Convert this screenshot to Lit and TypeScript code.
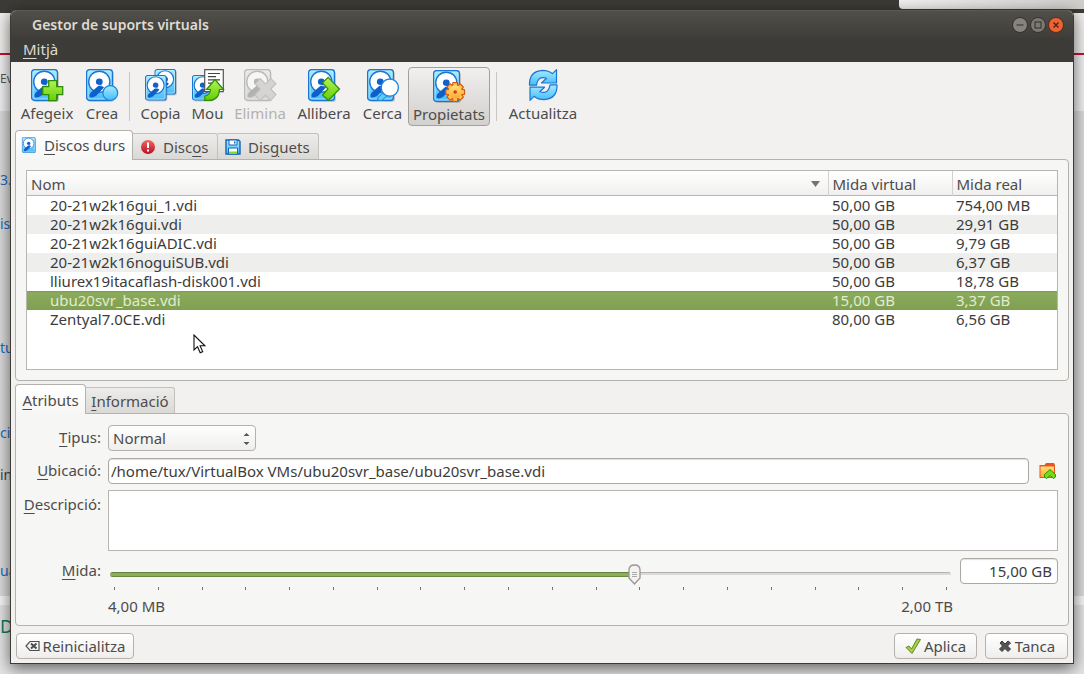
import { LitElement, html, svg, css } from "lit";
import { customElement, property, state } from "lit/decorators.js";
import { classMap } from "lit/directives/class-map.js";

interface Medium {
  name: string;
  virtual: string;
  actual: string;
}

const MEDIA: Medium[] = [
  { name: "20-21w2k16gui_1.vdi", virtual: "50,00 GB", actual: "754,00 MB" },
  { name: "20-21w2k16gui.vdi", virtual: "50,00 GB", actual: "29,91 GB" },
  { name: "20-21w2k16guiADIC.vdi", virtual: "50,00 GB", actual: "9,79 GB" },
  { name: "20-21w2k16noguiSUB.vdi", virtual: "50,00 GB", actual: "6,37 GB" },
  { name: "lliurex19itacaflash-disk001.vdi", virtual: "50,00 GB", actual: "18,78 GB" },
  { name: "ubu20svr_base.vdi", virtual: "15,00 GB", actual: "3,37 GB" },
  { name: "Zentyal7.0CE.vdi", virtual: "80,00 GB", actual: "6,56 GB" },
];

const defs = svg`
  <defs>
    <linearGradient id="sky" x1="0" y1="0" x2="0" y2="1">
      <stop offset="0" stop-color="#a6ebff" /><stop offset="1" stop-color="#46bcfa" />
    </linearGradient>
    <linearGradient id="leaf" x1="0" y1="0" x2="0" y2="1">
      <stop offset="0" stop-color="#b4f25a" /><stop offset="1" stop-color="#62cf00" />
    </linearGradient>
    <linearGradient id="sun" x1="0" y1="0" x2="0" y2="1">
      <stop offset="0" stop-color="#ffe27a" /><stop offset="1" stop-color="#ffa733" />
    </linearGradient>
    <linearGradient id="ruby" x1="0" y1="0" x2="0" y2="1">
      <stop offset="0" stop-color="#ee6a5c" /><stop offset="1" stop-color="#b80f2a" />
    </linearGradient>
  </defs>`;

const disk = svg`
  <rect x="2" y="2" width="26" height="31" rx="3" fill="#000" opacity=".18" />
  <rect x=".7" y=".7" width="25.6" height="30.6" rx="2.6" fill="url(#sky)" stroke="#1a76d2" stroke-width="1.4" />
  <rect x="2" y="2" width="23" height="28" rx="1.5" fill="none" stroke="#c4f3ff" stroke-width=".8" />
  <circle cx="13.3" cy="12.8" r="10.6" fill="#fff" stroke="#1a76d2" stroke-width="1.4" />
  <path d="M14.5 15 L18 18.5 L10 27 Q5.500 29.5 3.500 27.5 Q3 24.5 6.500 22 Z" fill="#0f5fca" />
  <circle cx="13.3" cy="12.8" r="3.4" fill="#0f62cc" />
  <path d="M9.700 15.8 L17 17" stroke="#fff" stroke-width=".8" />`;

const glyphs: Record<string, unknown> = {
  add: svg`${disk}
    <path d="M17.7 11.7 h8 v6 h6 v8 h-6 v6 h-8 v-6 h-6 v-8 h6 Z" fill="url(#leaf)" stroke="#2f8c0a" stroke-width="1.3" />`,
  create: svg`${disk}
    <circle cx="24.3" cy="24" r="7.4" fill="url(#sky)" stroke="#1a86dc" stroke-width="1.2" />`,
  copy: svg`
    <g transform="translate(9.5 0) scale(.8)">${disk}</g>
    <g transform="translate(0 6) scale(.8)">${disk}</g>`,
  move: svg`
    <g transform="translate(0 6) scale(.8)">${disk}</g>
    <path d="M12.7 .7 h18.6 v22 h-18.6 Z" fill="#fff" stroke="#555" stroke-width="1.2" />
    <path d="M16 4.5 h12 M16 7.7 h8 M16 10.9 h12 M16 14.1 h4" stroke="#444" stroke-width="1.2" />
    <path d="M23 10.5 L31.5 20.5 H27.5 Q27 31.3 17 31.3 H12.7 L13 27 Q18 26 18.5 20.5 H14.5 Z" fill="url(#leaf)" stroke="#2f8c0a" stroke-width="1.2" />`,
  remove: svg`${disk}
    <path d="M16.2 9.5 L21.5 14.8 L26.8 9.5 L32 14.7 L26.7 20 L32 25.5 L26.8 31.5 L21.5 26 L16.2 31.5 L11 25.8 L16.3 20 L11 14.7 Z" fill="#aaa" stroke="#777" stroke-width="1.1" />`,
  release: svg`${disk}
    <path d="M20.2 8.3 L31.5 20 L20.2 31.4 L14.5 26 L20 20 L14.5 13.8 Z" fill="url(#leaf)" stroke="#2f8c0a" stroke-width="1.2" />`,
  search: svg`${disk}
    <path d="M16.5 23.5 L20 27 L14.5 31.5 L10.5 31 L11 28.5 Z" fill="#5fcbfa" stroke="#2384da" stroke-width="1" />
    <circle cx="22.8" cy="18.6" r="8.6" fill="#fff" stroke="#2384da" stroke-width="1.4" />`,
  properties: svg`${disk}
    <g transform="translate(22.2 22)">
      ${[0, 45, 90, 135].map(
        (a) => svg`<rect x="-2.4" y="-9.3" width="4.8" height="18.6" rx=".6" transform="rotate(${a})" fill="#ffb53e" stroke="#d8560c" stroke-width="1.3" />`,
      )}
      <circle r="7.2" fill="#ffc250" stroke="#d8560c" stroke-width=".9" />
      ${[0, 45, 90, 135].map(
        (a) => svg`<rect x="-1.8" y="-8.6" width="3.6" height="17.2" transform="rotate(${a})" fill="#ffc250" />`,
      )}
      <circle r="6.4" fill="url(#sun)" />
      <circle r="1.8" fill="#d03f0a" />
    </g>`,
  refresh: svg`
    <path d="M2.5 16.2 Q2 2.200 15.5 1.300 Q21.5 1.300 25.5 4.700 L29.5 .7 V14 H14.5 L19.5 9.200 Q11 6.500 9.500 16.2 Z" fill="url(#sky)" stroke="#1a76d2" stroke-width="1.2" stroke-linejoin="round" />
    <path d="M30 15.8 Q30.5 29.8 17 30.7 Q11 30.7 7 27.3 L3 31.3 V18.2 H17.5 L12.8 22.8 Q21.5 25.5 23 15.8 Z" fill="url(#sky)" stroke="#1a76d2" stroke-width="1.2" stroke-linejoin="round" />`,
};

@customElement("tool-button")
export class ToolButton extends LitElement {
  @property() icon = "";
  @property() label = "";
  @property({ type: Boolean }) disabled = false;
  @property({ type: Boolean }) pressed = false;

  static styles = css`
    :host { display: block; }
    .tool {
      display: flex;
      flex-direction: column;
      align-items: center;
      gap: 2px;
      width: 100%;
      margin: 0;
      padding: 2px 0;
      border: 1px solid transparent;
      border-radius: 4px;
      background: none;
      color: #4c4c4c;
      font: 15px/20px "Noto Sans", sans-serif;
      white-space: nowrap;
    }
    .pressed {
      margin-top: 1px;
      padding-bottom: 1px;
      border-color: #a3a09c;
      background: linear-gradient(#f1f0ef, #dedcda 60%, #d3d1ce);
    }
    .tool:disabled { color: #b4b1ae; }
    .tool:disabled .glyph { filter: grayscale(1); opacity: 0.4; }
    .glyph { width: 32px; height: 32px; overflow: visible; }
    .label { display: block; }
  `;

  render() {
    return html`
      <button
        class=${classMap({ tool: true, pressed: this.pressed })}
        ?disabled=${this.disabled}
        aria-pressed=${this.pressed ? "true" : "false"}
      >
        <svg class="glyph" viewBox="0 0 32 32" aria-hidden="true">${defs}${glyphs[this.icon]}</svg>
        <span class="label">${this.label}</span>
      </button>
    `;
  }
}

@customElement("app-root")
export class AppRoot extends LitElement {
  @state() private selected = 5;
  @state() private size = 625;

  static styles = css`
    :host {
      display: grid;
      position: relative;
      box-sizing: border-box;
      min-height: 100vh;
      padding: 10px;
      overflow: hidden;
      font: 15px/20px "Noto Sans", sans-serif;
      color: #4c4c4c;
    }
    *, *::before { box-sizing: border-box; }
    u { text-decoration-thickness: 1px; text-underline-offset: 3px; }
    button, input, select, textarea { font: inherit; color: inherit; margin: 0; }

    .backdrop {
      position: absolute;
      inset: 0;
      overflow: hidden;
      background: linear-gradient(#3c3b37 0 13px, #f0efee 13px 53px, #c41230 53px 55px, #f1f1f3 55px 111px, #dcdcdc 111px 596px, #f7f7f7 596px 605px, #e4e4e4 605px);
    }
    .behind {
      display: grid;
      grid-template-rows: 69px 20px 81px 20px 24px 20px 104px 20px 65px 20px 22px 20px 76px 20px 35px 20px;
      width: 40px;
      font-size: 14px;
      color: #1a6dc4;
    }
    .behind :nth-child(1) { grid-row: 2; font-size: 12px; color: #555; }
    .behind :nth-child(2) { grid-row: 4; }
    .behind :nth-child(3) { grid-row: 6; }
    .behind :nth-child(4) { grid-row: 8; }
    .behind :nth-child(5) { grid-row: 10; }
    .behind :nth-child(6) { grid-row: 12; color: #444; }
    .behind :nth-child(7) { grid-row: 14; }
    .behind :nth-child(8) { grid-row: 16; font-size: 18px; color: #0a7a5a; }
    .panel-light {
      position: absolute;
      top: 0;
      right: 0;
      width: 185px;
      height: 9px;
      border-radius: 0 0 0 4px;
      background: linear-gradient(90deg, #f2f1f0, #cfcecb);
    }

    .window {
      position: relative;
      display: flex;
      flex-direction: column;
      min-width: 0;
      border: 1px solid #3c3b37;
      border-top-color: #5b5a54;
      border-radius: 6px 6px 0 0;
      background: #f2f1f0;
      box-shadow: 0 4px 16px rgba(0, 0, 0, 0.6);
    }
    .titlebar {
      display: flex;
      align-items: center;
      justify-content: space-between;
      height: 27px;
      padding: 0 9px 0 21px;
      border-radius: 5px 5px 0 0;
      background: linear-gradient(#504f4a, #3e3d39);
    }
    .title { margin: 0; font-size: 14px; font-weight: 600; color: #dfdbd2; }
    .controls { display: flex; gap: 2px; }
    .control { width: 16px; height: 16px; padding: 0; border: 0; background: none; }
    .control svg { display: block; }
    .menubar { height: 24px; padding: 1px 12px; background: #3c3b37; color: #dfdbd2; }
    .menubar button { padding: 0; border: 0; background: none; }

    .toolbar {
      display: grid;
      grid-template-columns: 66px 44px 11px 51px 43px 62px 66px 51px 82px 13px 80px;
      padding: 4px 3px;
    }
    .divider { justify-self: center; width: 1px; height: 49px; margin-top: 6px; background: #c9c6c3; }

    .tabs { display: flex; align-items: flex-end; margin: 0 4px -1px; position: relative; z-index: 1; }
    .tab {
      display: flex;
      align-items: center;
      gap: 7px;
      height: 26px;
      padding: 0 0 0 7px;
      margin-bottom: 1px;
      border: 1px solid #c4c0bc;
      border-left-width: 0;
      border-bottom: 0;
      border-radius: 0 3px 0 0;
      background: linear-gradient(#ececea, #dbd9d6);
      white-space: nowrap;
    }
    .tab.active {
      height: 30px;
      margin-bottom: 0;
      padding-left: 5px;
      border: 1px solid #b5b1ad;
      border-bottom: 0;
      border-radius: 4px 4px 0 0;
      background: linear-gradient(#fff, #f6f6f5);
    }
    .media-tabs .tab { width: 101px; }
    .media-tabs .tab.active { width: 118px; padding-bottom: 1px; }
    .media-tabs .tab.discs { width: 85px; }
    .detail-tabs .tab { width: 89px; justify-content: center; padding: 0; }
    .detail-tabs .tab.active { width: 71px; }
    .tab svg { flex: none; width: 16px; height: 16px; }
    .pane { margin: 0 4px; border: 1px solid #b5b1ad; border-radius: 0 4px 4px 4px; background: #f6f6f5; }

    .media { display: flex; flex: 1; min-height: 222px; padding: 10px; }
    .tree { position: relative; flex: 1; border: 1px solid #b9b5b2; background: #fff; }
    .list { width: 100%; border-collapse: collapse; table-layout: fixed; color: #3c3c3c; }
    .list .virtual { width: 124px; }
    .list .actual { width: 105px; }
    .list th {
      height: 25px;
      padding: 0 4px;
      border-left: 1px solid #d5d1cd;
      background: linear-gradient(#fff, #f0efee);
      box-shadow: inset 0 -1px 0 #b9b5b2;
      color: #4c4c4c;
      font-weight: 400;
      text-align: left;
    }
    .list th:first-child { border-left: 0; }
    .sort { display: flex; align-items: center; justify-content: space-between; padding-right: 4px; }
    .list td { height: 19px; padding: 0 4px; line-height: 19px; white-space: nowrap; }
    .list td:first-child { padding-left: 23px; }
    .list tr.alt { background: #eeeeed; }
    .list tr.selected { background: linear-gradient(#7c9c4e, #8aaa5c 2px, #809f51); color: #e2eccf; }
    .pointer { position: absolute; left: 166px; top: 163px; width: 13px; height: 21px; }

    .detail-tabs { margin-top: 3px; }
    .details {
      display: grid;
      grid-template-columns: 85px minmax(0, 1fr) 98px;
      column-gap: 7px;
      padding: 11px 10px 8px 0;
    }
    .details label { text-align: right; line-height: 25px; }
    .wide { grid-column: 2 / 4; }
    .field {
      height: 26px;
      border: 1px solid #aca8a4;
      border-radius: 4px;
      background: #fff;
      box-shadow: inset 0 1px 1px #e4e2e0;
      color: #3c3c3c;
    }
    .kind {
      appearance: none;
      display: block;
      width: 148px;
      height: 26px;
      padding: 0 4px;
      border: 1px solid #b5b1ad;
      border-radius: 4px;
      background: url('data:image/svg+xml,<svg xmlns="http://www.w3.org/2000/svg" width="7" height="13"><path d="M3.500 1l3 3h-6zM3.500 13l3-3h-6z" fill="%23555"/></svg>') no-repeat right 5px center, linear-gradient(#fff, #efeeed);
    }
    .kind, .kind-label { margin-bottom: 7px; }
    .location { display: flex; align-items: center; gap: 10px; margin-bottom: 6px; }
    .location .field { flex: 1; min-width: 0; padding: 0 2px; }
    .browse { width: 19px; height: 18px; padding: 0; border: 0; background: none; }
    .browse svg { display: block; }
    .description {
      display: block;
      width: 100%;
      height: 61px;
      margin-bottom: 7px;
      padding: 2px;
      border: 1px solid #b9b5b2;
      background: #fff;
      resize: none;
    }
    .description-label { padding-top: 2px; }
    .amount { width: 100%; padding: 0 5px; text-align: right; }
    .range { padding-top: 5px; }
    .slider {
      appearance: none;
      display: block;
      width: 100%;
      height: 22px;
      padding: 0 2px;
      background: none;
    }
    .slider::-webkit-slider-runnable-track {
      height: 5px;
      border-radius: 3px;
      background:
        linear-gradient(#66823d 1px, #8cae5c 1px 4px, #6c8a43 4px) 0 0 / var(--fill) 100% no-repeat,
        linear-gradient(#b5b1ad 1px, #dcdad8 1px 3px, #f6f6f5 3px);
    }
    .slider::-webkit-slider-thumb {
      appearance: none;
      width: 13px;
      height: 21px;
      margin-top: -8px;
      border: 0;
      background: url('data:image/svg+xml,<svg xmlns="http://www.w3.org/2000/svg" width="13" height="21"><path d="M1 6Q1 1 6.500 1T12 6V14L6.500 20L1 14Z" fill="%23f4f3f2" stroke="%23999591" stroke-width="1.300"/><path d="M4 8.500h5M4 10.500h5M4 12.500h5" stroke="%23aaa"/></svg>') no-repeat;
    }
    .ticks { display: flex; justify-content: space-between; height: 3px; margin: 2px 6px 0; }
    .ticks i { width: 1px; background: #77736f; }
    .ends { display: flex; justify-content: space-between; margin-top: 5px; line-height: 22px; }

    .footer { display: flex; gap: 8px; padding: 7px 5px 4px; }
    .push {
      display: flex;
      align-items: center;
      justify-content: center;
      gap: 3px;
      min-width: 83px;
      height: 26px;
      padding: 0 5px;
      border: 1px solid #b5b1ad;
      border-radius: 4px;
      background: linear-gradient(#fff, #efeeed);
      white-space: nowrap;
    }
    .push:first-child { min-width: 118px; margin-right: auto; }
    .push svg { flex: none; }
  `;

  private tool(icon: string, label: string, disabled = false, pressed = false) {
    return html`<tool-button icon=${icon} label=${label} ?disabled=${disabled} ?pressed=${pressed}></tool-button>`;
  }

  render() {
    return html`
      <div class="backdrop" aria-hidden="true">
        <div class="behind">
          <span>Ev</span><span>3.0</span><span>is</span><span>tu</span><span>ci</span><span>in</span><span>ua</span><span>DX</span>
        </div>
        <div class="panel-light"></div>
      </div>
      <main class="window">
        <header class="titlebar">
          <h1 class="title">Gestor de suports virtuals</h1>
          <div class="controls">
            <button class="control" aria-label="Minimitza">
              <svg width="16" height="16"><circle cx="8" cy="8" r="7.5" fill="#85837c" stroke="#32312d" /><path d="M4.500 8h7" stroke="#3a3935" stroke-width="1.200" /></svg>
            </button>
            <button class="control" aria-label="Maximitza">
              <svg width="16" height="16"><circle cx="8" cy="8" r="7.5" fill="#7b7972" stroke="#32312d" /><rect x="5" y="5" width="6" height="6" fill="none" stroke="#3a3935" stroke-width="1.200" /></svg>
            </button>
            <button class="control" aria-label="Tanca la finestra">
              <svg width="16" height="16"><circle cx="8" cy="8" r="7.5" fill="#ee6336" stroke="#5c2b18" /><path d="M5.500 5.500l5 5m0-5l-5 5" stroke="#4a2415" stroke-width="1.400" /></svg>
            </button>
          </div>
        </header>
        <nav class="menubar"><button><u>M</u>itjà</button></nav>

        <div class="toolbar" role="toolbar">
          ${this.tool("add", "Afegeix")} ${this.tool("create", "Crea")}
          <span class="divider"></span>
          ${this.tool("copy", "Copia")} ${this.tool("move", "Mou")}
          ${this.tool("remove", "Elimina", true)} ${this.tool("release", "Allibera")}
          ${this.tool("search", "Cerca")} ${this.tool("properties", "Propietats", false, true)}
          <span class="divider"></span>
          ${this.tool("refresh", "Actualitza")}
        </div>

        <div class="tabs media-tabs" role="tablist">
          <button class="tab active" role="tab" aria-selected="true">
            <svg viewBox="0 0 32 32">${defs}<g transform="translate(2 0)">${disk}</g></svg>
            <span><u>D</u>iscos durs</span>
          </button>
          <button class="tab discs" role="tab">
            <svg viewBox="0 0 16 16">${defs}<circle cx="8" cy="8" r="7" fill="url(#ruby)" /><path d="M8 3.500v5.500M8 10.500v2" stroke="#fff" stroke-width="2" /></svg>
            <span>Disc<u>o</u>s</span>
          </button>
          <button class="tab" role="tab">
            <svg viewBox="0 0 16 16">${defs}<path d="M1 1h12.500l1.500 1.500V15H1z" fill="url(#sky)" stroke="#1263b8" stroke-width="1.400" /><path d="M4 1h8v5H4z" fill="#fff" stroke="#1263b8" /><path d="M9 2.500h1.500v2H9z" fill="#1263b8" /><path d="M3.500 9h9v6h-9z" fill="#fff" stroke="#1263b8" /><path d="M4 12.500h8V15H4z" fill="#7fdc2c" /></svg>
            <span>Dis<u>g</u>uets</span>
          </button>
        </div>
        <section class="pane media">
          <div class="tree">
            <table class="list">
              <thead>
                <tr>
                  <th><span class="sort">Nom <svg width="9" height="6"><path d="M0 0h9L4.500 6z" fill="#777370" /></svg></span></th>
                  <th class="virtual">Mida virtual</th>
                  <th class="actual">Mida real</th>
                </tr>
              </thead>
              <tbody>
                ${MEDIA.map(
                  (m, i) => html`
                    <tr
                      class=${classMap({ alt: i % 2 === 1, selected: i === this.selected })}
                      @click=${() => (this.selected = i)}
                    >
                      <td>${m.name}</td>
                      <td>${m.virtual}</td>
                      <td>${m.actual}</td>
                    </tr>
                  `,
                )}
              </tbody>
            </table>
            <svg class="pointer" viewBox="0 0 13 21" aria-hidden="true">
              <path d="M1 1v15l3.500-3.300 2.700 6 2.500-1.100-2.600-5.800h4.800z" fill="#fff" stroke="#111" stroke-width="1.100" />
            </svg>
          </div>
        </section>

        <div class="tabs detail-tabs" role="tablist">
          <button class="tab active" role="tab" aria-selected="true"><span><u>A</u>tributs</span></button>
          <button class="tab" role="tab"><span><u>I</u>nformació</span></button>
        </div>
        <section class="pane details">
          <label class="kind-label" for="kind"><u>T</u>ipus:</label>
          <div class="wide"><select class="kind" id="kind"><option>Normal</option></select></div>

          <label for="location"><u>U</u>bicació:</label>
          <div class="wide location">
            <input class="field" id="location" type="text" .value=${"/home/tux/VirtualBox VMs/ubu20svr_base/ubu20svr_base.vdi"} />
            <button class="browse" aria-label="Navega">
              <svg width="18" height="18" viewBox="0 0 18 18">${defs}
                <path d="M.5 3h5L7 1h8l1 2v13H.5z" fill="#e95420" />
                <path d="M1.500 4.500h13.500v10.500H1.500z" fill="url(#sun)" />
                <path d="M11 7.500l5.500 5v2.500l-2 1.500L11 13.500l-3.500 3-2-1.500v-2.500z" fill="#6fe010" stroke="#2f8c0a" />
              </svg>
            </button>
          </div>

          <label class="description-label" for="description"><u>D</u>escripció:</label>
          <div class="wide"><textarea class="description" id="description"></textarea></div>

          <label for="size"><u>M</u>ida:</label>
          <div class="range">
            <input
              class="slider"
              id="size"
              type="range"
              min="0"
              max="1000"
              .value=${String(this.size)}
              style="--fill: ${this.size / 10}%"
              @input=${(e: Event) => (this.size = Number((e.target as HTMLInputElement).value))}
            />
            <div class="ticks">${Array.from({ length: 20 }, () => html`<i></i>`)}</div>
            <div class="ends"><span>4,00 MB</span><span>2,00 TB</span></div>
          </div>
          <div><input class="field amount" type="text" aria-label="Mida" .value=${"15,00 GB"} /></div>
        </section>

        <footer class="footer">
          <button class="push">
            <svg width="15" height="12"><path d="M5 1.500h9v9H5L1 6z" fill="none" stroke="#4c4c4c" stroke-width="1.200" /><path d="M6 3.500l5.500 5m0-5l-5.500 5" stroke="#4c4c4c" stroke-width="2" /></svg>
            <span>Reinicialitza</span>
          </button>
          <button class="push">
            <svg width="16" height="17"><path d="M1 9.500l3-1.500 2.500 3L12 1l3.500.5L7 15.500z" fill="#a6d04a" stroke="#5f8a1c" /></svg>
            <span>Aplica</span>
          </button>
          <button class="push">
            <svg width="14" height="14"><path d="M2 4l2-2 3 3 3-3 2.500 2-3 3 3 3-2.500 2.500-3-3-3 3L1.500 10l3-3z" fill="#555" stroke="#3c3c3c" /></svg>
            <span>Tanca</span>
          </button>
        </footer>
      </main>
    `;
  }
}
